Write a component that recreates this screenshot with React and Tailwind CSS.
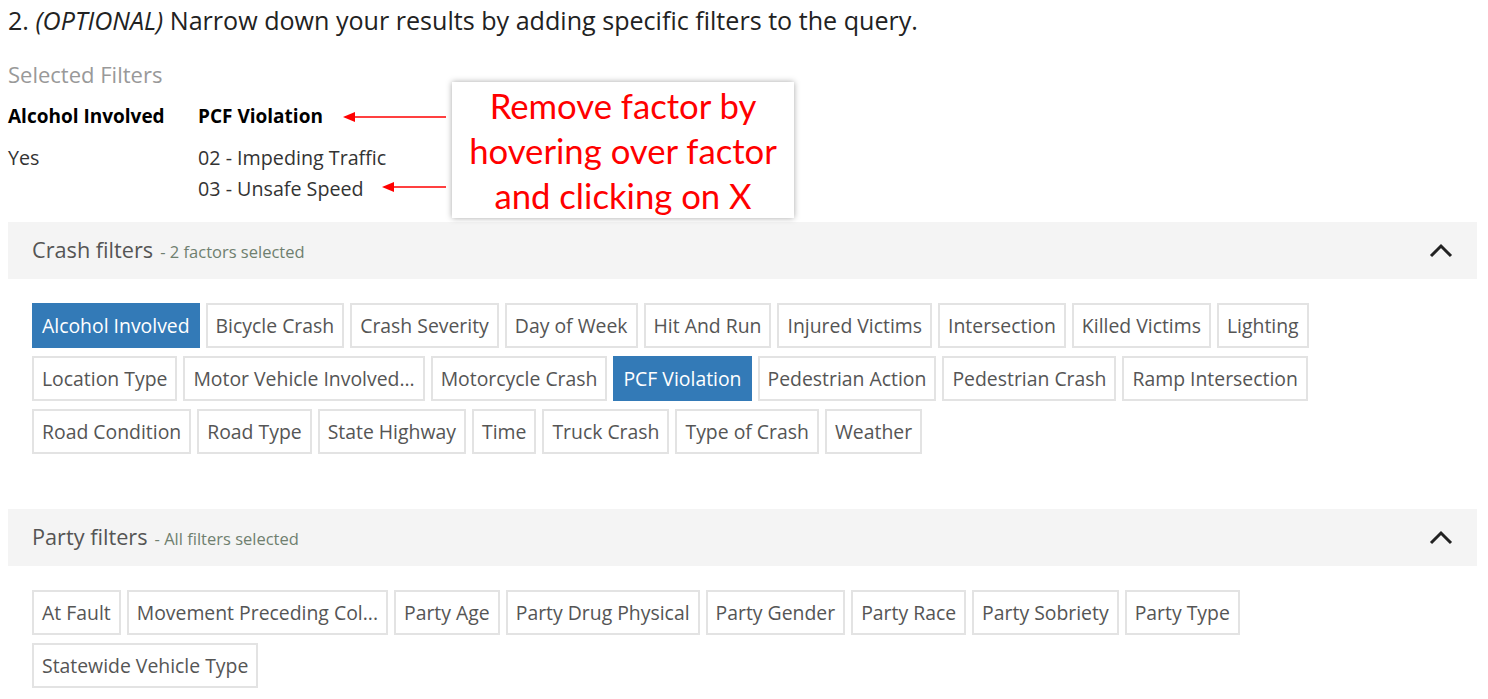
import React from "react";

const crash = [
  ["Alcohol Involved", true],
  ["Bicycle Crash"],
  ["Crash Severity"],
  ["Day of Week"],
  ["Hit And Run"],
  ["Injured Victims"],
  ["Intersection"],
  ["Killed Victims"],
  ["Lighting"],
  ["Location Type"],
  ["Motor Vehicle Involved..."],
  ["Motorcycle Crash"],
  ["PCF Violation", true],
  ["Pedestrian Action"],
  ["Pedestrian Crash"],
  ["Ramp Intersection"],
  ["Road Condition"],
  ["Road Type"],
  ["State Highway"],
  ["Time"],
  ["Truck Crash"],
  ["Type of Crash"],
  ["Weather"],
];

const party = [
  ["At Fault"],
  ["Movement Preceding Col..."],
  ["Party Age"],
  ["Party Drug Physical"],
  ["Party Gender"],
  ["Party Race"],
  ["Party Sobriety"],
  ["Party Type"],
  ["Statewide Vehicle Type"],
];

function Chip({ label, active }) {
  return (
    <div
      className={
        "h-[45px] px-[8px] flex items-center text-[19.4px] border-2 " +
        (active
          ? "bg-[#337ab7] border-[#337ab7] text-white"
          : "bg-white border-[#e3e3e3] text-[#555]")
      }
    >
      {label}
    </div>
  );
}

function Chevron() {
  return (
    <svg width="24" height="16" viewBox="0 0 24 16" className="text-[#222]">
      <path d="M2 13 L12 3 L22 13" fill="none" stroke="currentColor" strokeWidth="3" />
    </svg>
  );
}

function Section({ title, note, items, rowsWidth }) {
  return (
    <div>
      <div className="h-[57px] bg-[#f4f4f4] flex items-center justify-between pl-[24px] pr-[24px]">
        <div className="flex items-baseline">
          <span className="text-[21.7px] text-[#555]">{title}</span>
          <span className="text-[16.5px] text-[#6f7f6f] ml-[7px]">- {note}</span>
        </div>
        <Chevron />
      </div>
      <div className={"pl-[24px] pt-[24px] flex flex-wrap gap-x-[6px] gap-y-[8px] " + rowsWidth}>
        {items.map(([l, a]) => (
          <Chip key={l} label={l} active={a} />
        ))}
      </div>
    </div>
  );
}

export default function App() {
  return (
    <div
      className="relative w-[1488px] h-[699px] bg-white overflow-hidden pl-[8px] pr-[11px]"
      style={{ fontFamily: '"Open Sans", "Liberation Sans", sans-serif' }}
    >
      <div className="h-[40px] text-[25.1px] text-[#222] leading-[40px] whitespace-nowrap">
        2. <i>(OPTIONAL)</i> Narrow down your results by adding specific filters to the query.
      </div>
      <div className="mt-[19px] text-[22px] text-[#999] leading-[30px]">Selected Filters</div>
      <div className="flex mt-[13px] text-[19.7px] text-[#333]">
        <div className="w-[190px]">
          <div className="font-bold text-[19px] text-black leading-[28px]">Alcohol Involved</div>
          <div className="mt-[12px] leading-[31px]">Yes</div>
        </div>
        <div>
          <div className="font-bold text-[19px] text-black leading-[28px]">PCF Violation</div>
          <div className="mt-[12px] leading-[31px]">02 - Impeding Traffic</div>
          <div className="leading-[31px]">03 - Unsafe Speed</div>
        </div>
      </div>

      <div className="mt-[18px]">
        <Section title="Crash filters" note="2 factors selected" items={crash} rowsWidth="w-[1320px]" />
      </div>
      <div className="mt-[55px]">
        <Section title="Party filters" note="All filters selected" items={party} rowsWidth="w-[1250px]" />
      </div>

      {/* annotation overlay */}
      <svg className="absolute left-[340px] top-[108px]" width="110" height="90">
        <line x1="14" y1="9" x2="106" y2="9" stroke="#ff0000" strokeWidth="1.5" />
        <polygon points="3,9 15,4 15,14" fill="#ff0000" />
        <line x1="52" y1="79" x2="106" y2="79" stroke="#ff0000" strokeWidth="1.5" />
        <polygon points="42,79 54,74 54,84" fill="#ff0000" />
      </svg>
      <div
        className="absolute left-[452px] top-[82px] w-[342px] h-[136px] bg-white shadow-[0_0_6px_rgba(0,0,0,0.35)] flex flex-col items-center justify-center text-[#ff0000] text-[34.7px] leading-[45px]"
        style={{ fontFamily: 'Lato, "Open Sans", sans-serif' }}
      >
        <div>Remove factor by</div>
        <div>hovering over factor</div>
        <div>and clicking on X</div>
      </div>
    </div>
  );
}
